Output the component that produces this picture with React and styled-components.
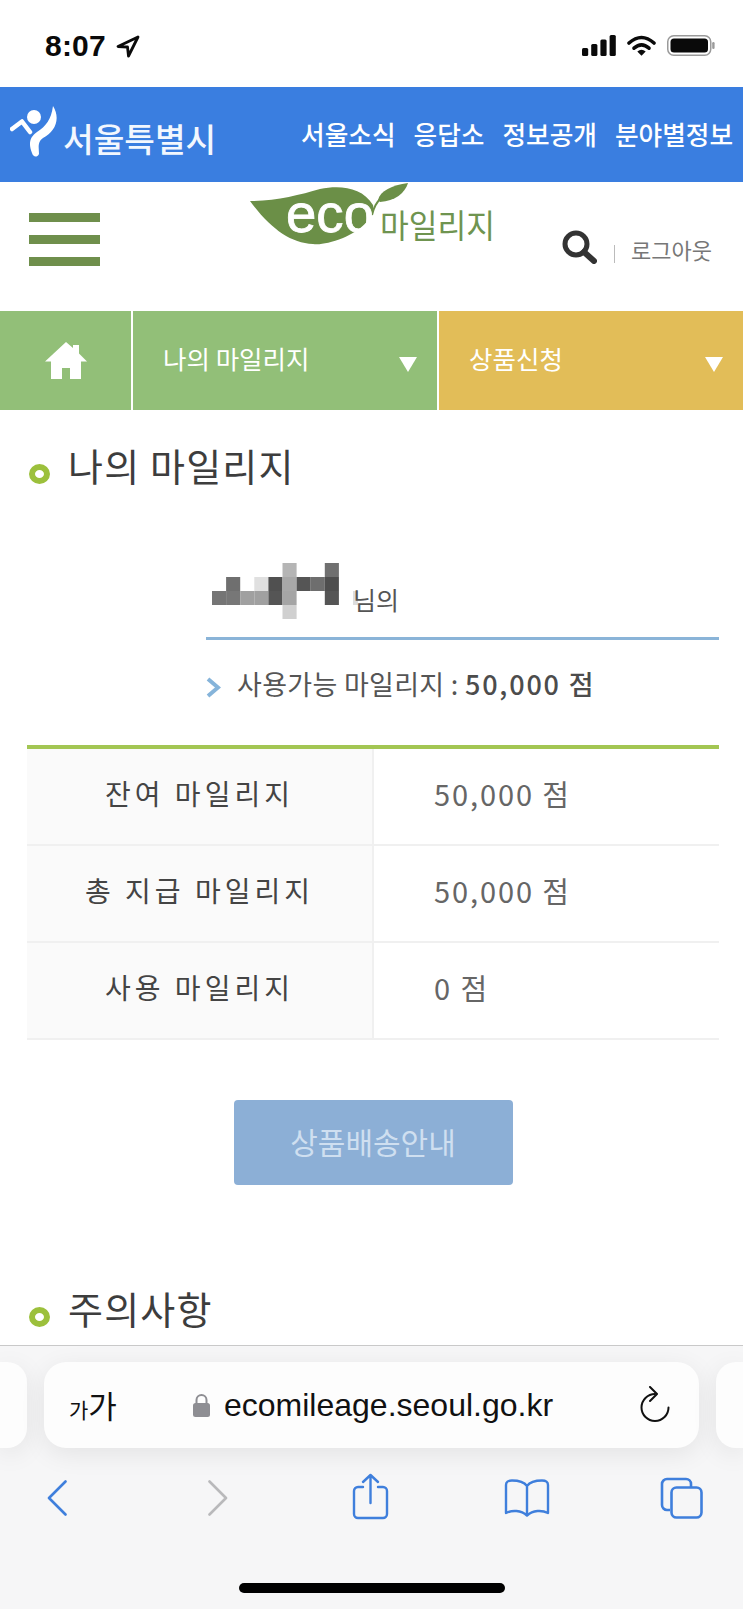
import React from "react";
import styled, { createGlobalStyle } from "styled-components";

const KR = `"Noto Sans CJK KR", "Noto Sans", sans-serif`;

const Global = createGlobalStyle`
  html, body { margin: 0; padding: 0; background: #fff; }
  * { box-sizing: border-box; }
`;

const Page = styled.div`
  width: 743px; height: 1609px; display: flex; flex-direction: column;
  overflow: hidden; background: #fff; font-family: ${KR}; color: #444;
`;

/* status bar */
const StatusBar = styled.div`
  height: 87px; flex: none; display: flex; align-items: flex-start;
  padding: 35px 28px 0 45px;
`;
const Clock = styled.div`
  font: 700 30px/21px "Liberation Sans", sans-serif; color: #0a0a0a; width: 71px; letter-spacing: .2px;
`;
const StatusRight = styled.div`
  margin-left: auto; display: flex; gap: 11px; align-items: flex-start;
`;

/* blue bar */
const BlueBar = styled.div`
  height: 95px; flex: none; background: #3a7ee0; display: flex; align-items: flex-start;
  padding: 18px 0 0 10px; color: #fff;
`;
const CityLogo = styled.div`
  display: flex; align-items: flex-start; width: 291px; gap: 3px;
`;
const CityName = styled.div`
  font: 500 33.3px/34px ${KR}; margin-top: 16px; white-space: nowrap; color: #f2f7fe;
`;
const BlueNav = styled.nav`
  display: flex; gap: 18px; font: 500 25.7px/30px ${KR}; margin-top: 14px; white-space: nowrap;
`;

/* site header */
const SiteHeader = styled.div`
  height: 129px; flex: none; display: flex; align-items: flex-start; padding-left: 29px;
`;
const Burger = styled.div`
  width: 71px; display: flex; flex-direction: column; gap: 13px; margin-top: 31px; flex: none;
`;
const BurgerBar = styled.div`
  height: 9px; background: #6f8f4c;
`;
const EcoLogo = styled.svg`
  display: block; flex: none; margin-left: 150px; margin-top: 1px;
`;
const HeaderTools = styled.div`
  display: flex; align-items: flex-start; margin-left: 55px; margin-top: 48px; flex: none;
`;
const Pipe = styled.div`
  width: 1px; height: 18px; background: #bbb; margin: 15px 16px 0 17px;
`;
const Logout = styled.div`
  font: 400 22px/24px ${KR}; color: #777; margin-top: 7px; white-space: nowrap;
`;

/* tabs */
const Tabs = styled.div`
  height: 99px; flex: none; display: grid; grid-template-columns: 131px 304px 1fr; gap: 2px; background: #fff;
`;
const HomeTab = styled.div`
  background: #92bf78; display: flex; align-items: center; justify-content: center; padding: 0 0 0 1px;
`;
const Tab = styled.div`
  background: ${(p) => p.$bg}; display: flex; align-items: center; justify-content: space-between;
  padding: 0 20px 6px ${(p) => p.$pad}px; color: #fff; font: 400 25.5px/30px ${KR};
`;
const Caret = styled.div`
  width: 0; height: 0; margin-top: 14px;
  border-left: 9px solid transparent; border-right: 9px solid transparent; border-top: 15px solid #fff;
`;

/* content */
const Main = styled.main`
  flex: 1; min-height: 0; overflow: hidden; padding: 0 24px 0 27px;
`;
const SectionTitle = styled.div`
  display: flex; align-items: center; gap: 18px; height: 50px; margin-top: ${(p) => p.$top}px;
  font: 400 38px/50px ${KR}; letter-spacing: 1.2px; color: #3d3d3d; padding-left: 2px;
`;
const Bullet = styled.span`
  width: 21px; height: 20px; border-radius: 50%; border: 6px solid #9cc03c; margin-top: 18px; flex: none;
`;
const Profile = styled.div`
  margin: 73px 0 0 179px;
`;
const NameRow = styled.div`
  display: flex; align-items: flex-start; padding-left: 6px; height: 56px;
`;
const Mosaic = styled.svg`
  display: block; flex: none; margin-right: -5px;
`;
const NameSuffix = styled.span`
  font: 400 25px/28px ${KR}; color: #555; margin-top: 22px;
`;
const BlueRule = styled.div`
  height: 3px; margin-top: 18px; background: #8ab4d8;
`;
const PointRow = styled.div`
  display: flex; align-items: center; height: 40px; margin-top: 24px; font: 400 27px/40px ${KR}; letter-spacing: .3px; color: #555; white-space: pre;
`;
const Chevron = styled.svg`
  display: block; flex: none; margin-right: 16px; margin-top: 7px;
`;
const Strong = styled.b`
  font-weight: 500; letter-spacing: 1.8px; color: #4c4c4c;
`;
const Table = styled.div`
  margin-top: 41px; border-top: 4px solid #a3c653;
`;
const Row = styled.div`
  display: grid; grid-template-columns: 347px 1fr; height: 97px; border-bottom: 2px solid #f0f0f0;
`;
const HeadCell = styled.div`
  background: #fafafa; border-right: 2px solid #f0f0f0; display: flex; align-items: center; justify-content: center;
  font: 400 28px/34px ${KR}; color: #444; letter-spacing: 4px; padding-bottom: 7px;
`;
const ValueCell = styled.div`
  display: flex; align-items: center; padding: 0 0 7px 60px;
  font: 400 29px/34px ${KR}; color: #666; letter-spacing: 1.9px;
`;
const ButtonWrap = styled.div`
  display: flex; justify-content: center; margin-top: 60px;
`;
const DeliveryButton = styled.button`
  width: 279px; height: 85px; border: 0; border-radius: 4px; background: #8cafd6; color: #cfdff0;
  font: 400 30px/36px ${KR}; padding: 0 0 4px;
`;

/* browser chrome */
const Chrome = styled.div`
  height: 264px; flex: none; background: #f6f6f7; border-top: 1px solid #c9c9c9; display: flex; flex-direction: column;
`;
const AddressRow = styled.div`
  display: grid; grid-template-columns: 27px 655px 27px; gap: 17px; height: 86px; margin-top: 16px;
`;
const SidePill = styled.div`
  background: #fdfdfd; box-shadow: 0 6px 26px rgba(0,0,0,.08);
  border-radius: ${(p) => (p.$left ? "0 20px 20px 0" : "20px 0 0 20px")};
`;
const AddressBar = styled.div`
  background: #fdfdfd; border-radius: 22px; box-shadow: 0 6px 26px rgba(0,0,0,.08);
  display: flex; align-items: center; padding-left: 25px; color: #111;
`;
const FontToggle = styled.div`
  width: 124px; display: flex; align-items: baseline; font-family: ${KR}; flex: none; margin-top: 4px;
`;
const SmallGa = styled.span` font-size: 21px; line-height: 34px; `;
const BigGa = styled.span` font-size: 31px; line-height: 34px; `;
const Lock = styled.svg` display: block; flex: none; margin-right: 14px; `;
const Url = styled.div`
  font: 400 32px/36px "Liberation Sans", sans-serif; color: #111; width: 416px; flex: none; white-space: nowrap;
`;
const Reload = styled.svg` display: block; flex: none; margin-bottom: 2px; `;
const Toolbar = styled.div`
  display: flex; align-items: center; height: 50px; margin-top: 25px; padding-left: 47px;
`;
const ToolIcon = styled.svg`
  display: block; flex: none; margin-left: ${(p) => p.$gap || 0}px; margin-top: ${(p) => p.$up || 0}px;
`;
const HomeIndicator = styled.div`
  width: 266px; height: 10px; border-radius: 5px; background: #000; margin: 60px 0 0 239px;
`;

const mosaicCells = [
  [5, 0, "#b5b5b5"], [8, 0, "#707070"],
  [1, 1, "#6f6f6f"], [3, 1, "#e0e0e0"], [4, 1, "#505050"], [5, 1, "#a8a8a8"], [6, 1, "#555"], [7, 1, "#6e6e6e"], [8, 1, "#4e4e4e"],
  [0, 2, "#757575"], [1, 2, "#777"], [2, 2, "#a0a0a0"], [3, 2, "#a0a0a0"], [4, 2, "#555"], [5, 2, "#a5a5a5"], [8, 2, "#555"],
  [5, 3, "#d0d0d0"],
];

const rows = [
  ["잔여 마일리지", "50,000 점"],
  ["총 지급 마일리지", "50,000 점"],
  ["사용 마일리지", "0 점"],
];

const TOOL = "#3f7fdc";

export default function App() {
  return (
    <Page>
      <Global />
      <StatusBar>
        <Clock>8:07</Clock>
        <svg width="24" height="23" viewBox="0 0 24 23">
          <path d="M22 2 L2 11.5 L11.5 12 L12.5 21 Z" fill="none" stroke="#0a0a0a" strokeWidth="2.8" strokeLinejoin="round" />
        </svg>
        <StatusRight>
          <svg width="34" height="21" viewBox="0 0 34 21">
            <rect x="0" y="13" width="6.2" height="8" rx="1.5" fill="#0a0a0a" />
            <rect x="9.2" y="9" width="6.2" height="12" rx="1.5" fill="#0a0a0a" />
            <rect x="18.4" y="4.5" width="6.2" height="16.5" rx="1.5" fill="#0a0a0a" />
            <rect x="27.6" y="0" width="6.2" height="21" rx="1.5" fill="#0a0a0a" />
          </svg>
          <svg width="29" height="21" viewBox="0 0 29 21">
            <path d="M2 8 Q14.5 -3 27 8" fill="none" stroke="#0a0a0a" strokeWidth="3.6" strokeLinecap="round" />
            <path d="M7 13.2 Q14.5 6.5 22 13.2" fill="none" stroke="#0a0a0a" strokeWidth="3.6" strokeLinecap="round" />
            <path d="M14.5 20.8 L10.3 16.5 Q14.5 13 18.7 16.5 Z" fill="#0a0a0a" />
          </svg>
          <svg width="48" height="21" viewBox="0 0 48 21">
            <rect x="0.75" y="0.75" width="43" height="19.5" rx="6" fill="none" stroke="#9a9a9a" strokeWidth="1.5" />
            <rect x="3.5" y="3.5" width="37.5" height="14" rx="3.5" fill="#0a0a0a" />
            <rect x="45.2" y="7" width="2.4" height="7" rx="1.2" fill="#9a9a9a" />
          </svg>
        </StatusRight>
      </StatusBar>

      <BlueBar>
        <CityLogo>
          <svg width="50" height="53" viewBox="0 0 50 53">
            <circle cx="24" cy="12" r="7" fill="#fff" />
            <path d="M2 24 L12 16.5 L20 27" fill="none" stroke="#fff" strokeWidth="4.5" strokeLinecap="round" strokeLinejoin="round" />
            <path d="M43 1 C51 14 45 27 33 33 C27 37 29 44 29 49 C27 53 23 52 22 48 C18 38 20 32 27 27 C36 21 41 15 43 1 Z" fill="#fff" />
          </svg>
          <CityName>서울특별시</CityName>
        </CityLogo>
        <BlueNav>
          <span>서울소식</span>
          <span>응답소</span>
          <span>정보공개</span>
          <span>분야별정보</span>
        </BlueNav>
      </BlueBar>

      <SiteHeader>
        <Burger>
          <BurgerBar />
          <BurgerBar />
          <BurgerBar />
        </Burger>
        <EcoLogo width="257" height="68" viewBox="0 0 257 68">
          <path d="M0 18 C25 18 50 12 70 6 C90 2 112 4 123 22 C126 34 110 48 93 55 C80 60 70 62 63 61 C40 60 20 45 0 18 Z" fill="#6b8f47" />
          <path d="M128 17 C130 8 142 2 158 0 C155 10 145 18 130 19 Z" fill="#6b8f47" />
          <path d="M122 32 C124 24 126 20 132 14" fill="none" stroke="#6b8f47" strokeWidth="2" />
          <text x="36" y="49" fontFamily="Liberation Sans, sans-serif" fontSize="54" fill="#fff" stroke="#fff" strokeWidth="0.8" textLength="88" lengthAdjust="spacingAndGlyphs">eco</text>
          <text x="130" y="55" fontFamily={KR} fontSize="33" fill="#6f9450" textLength="115" lengthAdjust="spacingAndGlyphs">마일리지</text>
        </EcoLogo>
        <HeaderTools>
          <svg width="35" height="34" viewBox="0 0 35 34">
            <circle cx="14" cy="14" r="11" fill="none" stroke="#333" strokeWidth="5" />
            <path d="M22 22 L32 31" stroke="#333" strokeWidth="6" strokeLinecap="round" />
          </svg>
          <Pipe />
          <Logout>로그아웃</Logout>
        </HeaderTools>
      </SiteHeader>

      <Tabs>
        <HomeTab>
          <svg width="42" height="37" viewBox="0 0 42 37">
            <path d="M21 0 L28 6 V3 H34 V11.5 L42 19.5 H36 V37 H25 V26 H17 V37 H6 V19.5 H0 Z" fill="#fff" />
          </svg>
        </HomeTab>
        <Tab $bg="#92bf78" $pad={30}>나의 마일리지<Caret /></Tab>
        <Tab $bg="#e2bd58" $pad={30}>상품신청<Caret /></Tab>
      </Tabs>

      <Main>
        <SectionTitle $top={30}><Bullet />나의 마일리지</SectionTitle>
        <Profile>
          <NameRow>
            <Mosaic width="146" height="56" viewBox="0 0 146 56">
              {mosaicCells.map(([c, r, f]) => (
                <rect key={`${c}-${r}`} x={c * 14.1} y={r * 14} width="14.1" height="14" fill={f} />
              ))}
              <rect x="141" y="28" width="5" height="14" fill="#ddd" />
            </Mosaic>
            <NameSuffix>님의</NameSuffix>
          </NameRow>
          <BlueRule />
          <PointRow>
            <Chevron width="15" height="21" viewBox="0 0 15 21">
              <path d="M2 2 L12 10.5 L2 19" fill="none" stroke="#86b4da" strokeWidth="4" />
            </Chevron>
            사용가능 마일리지 : <Strong>50,000 점</Strong>
          </PointRow>
        </Profile>
        <Table>
          {rows.map(([h, v]) => (
            <Row key={h}>
              <HeadCell>{h}</HeadCell>
              <ValueCell>{v}</ValueCell>
            </Row>
          ))}
        </Table>
        <ButtonWrap>
          <DeliveryButton>상품배송안내</DeliveryButton>
        </ButtonWrap>
        <SectionTitle $top={98}><Bullet />주의사항</SectionTitle>
      </Main>

      <Chrome>
        <AddressRow>
          <SidePill $left />
          <AddressBar>
            <FontToggle><SmallGa>가</SmallGa><BigGa>가</BigGa></FontToggle>
            <Lock width="17" height="24" viewBox="0 0 17 24">
              <path d="M3.5 11 V7 a5 5 0 0 1 10 0 V11" fill="none" stroke="#8e8e93" strokeWidth="2" />
              <rect x="0" y="10" width="17" height="14" rx="2.5" fill="#8e8e93" />
            </Lock>
            <Url>ecomileage.seoul.go.kr</Url>
            <Reload width="31" height="37" viewBox="0 0 31 37">
              <path d="M15 8 A13.5 13.5 0 1 0 28.5 21.5" fill="none" stroke="#111" strokeWidth="2" strokeLinecap="round" />
              <path d="M10 1 L17 8 L10 15" fill="none" stroke="#111" strokeWidth="2" strokeLinecap="round" strokeLinejoin="round" />
            </Reload>
          </AddressBar>
          <SidePill />
        </AddressRow>
        <Toolbar>
          <ToolIcon width="20" height="36" viewBox="0 0 20 36">
            <path d="M18.5 1.5 L2 18 L18.5 34.5" fill="none" stroke={TOOL} strokeWidth="2.6" strokeLinecap="round" strokeLinejoin="round" />
          </ToolIcon>
          <ToolIcon $gap={141} width="20" height="36" viewBox="0 0 20 36">
            <path d="M1.5 1.5 L18 18 L1.5 34.5" fill="none" stroke="#b9b9bb" strokeWidth="2.6" strokeLinecap="round" strokeLinejoin="round" />
          </ToolIcon>
          <ToolIcon $gap={124} $up={-3} width="37" height="47" viewBox="0 0 37 47">
            <path d="M11 14 H6 a4 4 0 0 0 -4 4 V41 a4 4 0 0 0 4 4 H31 a4 4 0 0 0 4 -4 V18 a4 4 0 0 0 -4 -4 H26" fill="none" stroke={TOOL} strokeWidth="2.4" strokeLinecap="round" />
            <path d="M18.5 30 V2 M11 9 L18.5 2 L26 9" fill="none" stroke={TOOL} strokeWidth="2.4" strokeLinecap="round" strokeLinejoin="round" />
          </ToolIcon>
          <ToolIcon $gap={115} width="46" height="38" viewBox="0 0 46 38">
            <path d="M23 7 C20 3 14 1.5 8 1.5 C4 1.5 2 3 2 6 V34 C8 31 17 31 23 36.5 C29 31 38 31 44 34 V6 C44 3 42 1.5 38 1.5 C32 1.5 26 3 23 7 Z M23 7 V36" fill="none" stroke={TOOL} strokeWidth="2.4" strokeLinejoin="round" />
          </ToolIcon>
          <ToolIcon $gap={110} width="43" height="42" viewBox="0 0 43 42">
            <rect x="11.5" y="10.5" width="30" height="30" rx="5" fill="none" stroke={TOOL} strokeWidth="2.6" />
            <path d="M10 33 H7 a5 5 0 0 1 -5 -5 V7 a5 5 0 0 1 5 -5 H26 a5 5 0 0 1 5 5 V10" fill="none" stroke={TOOL} strokeWidth="2.6" />
          </ToolIcon>
        </Toolbar>
        <HomeIndicator />
      </Chrome>
    </Page>
  );
}
